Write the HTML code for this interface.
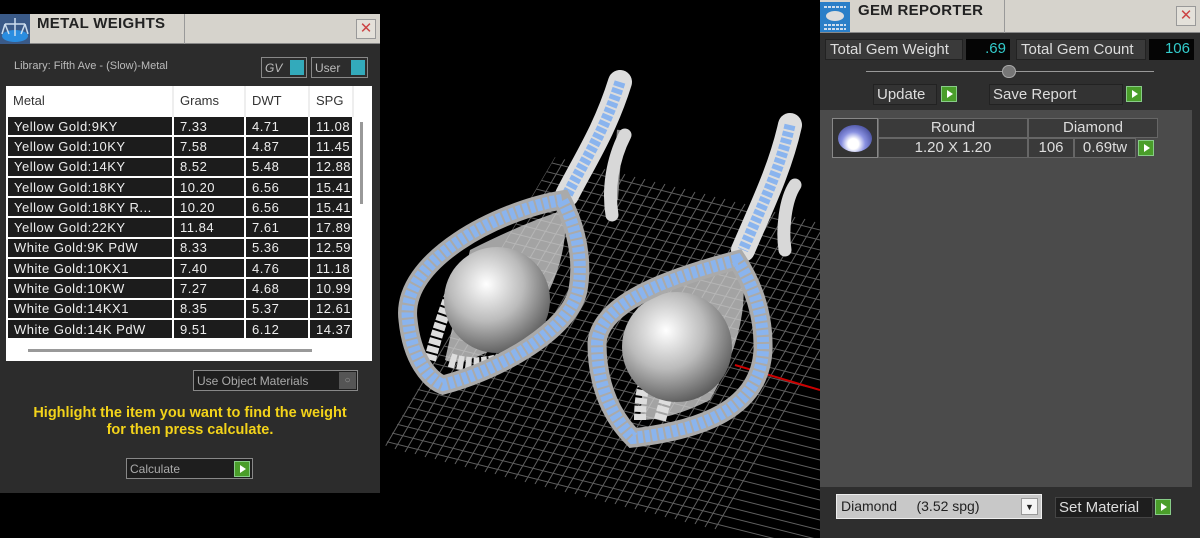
<!DOCTYPE html>
<html><head><meta charset="utf-8"><style>
*{margin:0;padding:0;box-sizing:border-box}
body{width:1200px;height:538px;background:#000;position:relative;overflow:hidden;font-family:"Liberation Sans",sans-serif}
.abs{position:absolute}
.title{background:#d6d3cc;border-bottom:1px solid #888}
.tt{font-weight:bold;font-size:15px;color:#222;letter-spacing:0.3px}
.x{width:20px;height:20px;border:1px solid #999;background:#e4e1da;color:#c44;font-size:15px;text-align:center;line-height:18px}
table{border-collapse:collapse}
td{font-size:13px;color:#eee;background:#1c1c1c;border:2px solid #fff;height:20.3px;padding:0 6px;letter-spacing:0.5px;white-space:nowrap;overflow:hidden}
th{font-size:13px;color:#333;font-weight:normal;text-align:left;padding:0 6px;height:30px;border-right:2px solid #eee}
.gbtn{width:16px;height:16px;background:#4a9e2a;border:1px solid #8c8;position:absolute}
.gbtn:after{content:"";position:absolute;left:5px;top:3px;border-left:6px solid #fff;border-top:4px solid transparent;border-bottom:4px solid transparent}
.rt{color:#ddd;font-size:15px}
</style></head><body>

<svg class="abs" style="left:380px;top:0" width="440" height="538" viewBox="380 0 440 538">
<defs>
<clipPath id="gc"><polygon points="555,157 820,222 820,538 470,538 385,445"/></clipPath>
<radialGradient id="pg" cx="0.4" cy="0.35" r="0.7"><stop offset="0" stop-color="#fff"/><stop offset="0.5" stop-color="#bbb"/><stop offset="1" stop-color="#555"/></radialGradient>
</defs>
<g clip-path="url(#gc)" stroke="#777" stroke-width="1" opacity="0.8">
<path d="M380,120 l460,115 M380,130 l460,115 M380,140 l460,115 M380,150 l460,115 M380,160 l460,115 M380,170 l460,115 M380,180 l460,115 M380,190 l460,115 M380,200 l460,115 M380,210 l460,115 M380,220 l460,115 M380,230 l460,115 M380,240 l460,115 M380,250 l460,115 M380,260 l460,115 M380,270 l460,115 M380,280 l460,115 M380,290 l460,115 M380,300 l460,115 M380,310 l460,115 M380,320 l460,115 M380,330 l460,115 M380,340 l460,115 M380,350 l460,115 M380,360 l460,115 M380,370 l460,115 M380,380 l460,115 M380,390 l460,115 M380,400 l460,115 M380,410 l460,115 M380,420 l460,115 M380,430 l460,115 M380,440 l460,115"/>
<path d="M555,157 l-170,290 M565,159 l-170,290 M575,162 l-170,290 M585,164 l-170,290 M595,167 l-170,290 M605,169 l-170,290 M615,172 l-170,290 M625,174 l-170,290 M635,177 l-170,290 M645,179 l-170,290 M655,182 l-170,290 M665,184 l-170,290 M675,187 l-170,290 M685,189 l-170,290 M695,192 l-170,290 M705,194 l-170,290 M715,197 l-170,290 M725,199 l-170,290 M735,202 l-170,290 M745,204 l-170,290 M755,207 l-170,290 M765,209 l-170,290 M775,212 l-170,290 M785,214 l-170,290 M795,217 l-170,290 M805,219 l-170,290 M815,222 l-170,290 M825,224 l-170,290 M835,227 l-170,290 M845,229 l-170,290 M855,232 l-170,290 M865,234 l-170,290 M875,237 l-170,290 M885,239 l-170,290"/>
</g>
<line x1="735" y1="365" x2="820" y2="390" stroke="#c00" stroke-width="2"/>
<!-- left earring -->
<path d="M620,130 L615,200" stroke="#888" stroke-width="6" fill="none"/>
<path d="M625,135 C612,160 608,190 612,215" stroke="#d8d8d8" stroke-width="13" stroke-linecap="round" fill="none"/>
<path d="M620,82 C605,130 585,160 567,195" stroke="#ddd" stroke-width="24" stroke-linecap="round" fill="none"/>
<path d="M620,82 C605,130 585,160 567,195" stroke="#8ab4ee" stroke-width="11" stroke-dasharray="5 2" fill="none"/>
<path d="M470,250 q60,-30 95,-40 q5,60 -40,120 q-60,40 -80,30 z" fill="#ccc" opacity="0.8"/>
<path d="M450,360 q60,20 125,-55" stroke="#ddd" stroke-width="14" stroke-dasharray="6 2" fill="none"/>
<path d="M430,360 q10,-40 30,-90" stroke="#ddd" stroke-width="12" stroke-dasharray="6 2" fill="none"/>
<circle cx="497" cy="300" r="53" fill="url(#pg)"/>
<path d="M562,200 C500,210 400,260 408,320 C412,360 430,380 443,385 C500,370 570,330 578,290 C585,250 570,215 562,200Z" stroke="#aaa" stroke-width="19" fill="none"/>
<path d="M562,200 C500,210 400,260 408,320 C412,360 430,380 443,385 C500,370 570,330 578,290 C585,250 570,215 562,200Z" stroke="#8ab4ee" stroke-width="12" stroke-dasharray="5 2" fill="none"/>
<!-- right earring -->
<path d="M795,185 C785,200 782,230 785,250" stroke="#d8d8d8" stroke-width="13" stroke-linecap="round" fill="none"/>
<path d="M790,125 C780,170 760,210 743,250" stroke="#ddd" stroke-width="24" stroke-linecap="round" fill="none"/>
<path d="M790,125 C780,170 760,210 743,250" stroke="#8ab4ee" stroke-width="11" stroke-dasharray="5 2" fill="none"/>
<path d="M650,300 q60,-30 90,-40 q15,60 -30,140 q-40,20 -70,20 z" fill="#ccc" opacity="0.8"/>
<path d="M640,420 q0,-40 15,-60 M660,420 q10,-40 20,-50" stroke="#ddd" stroke-width="12" stroke-dasharray="6 2" fill="none"/>
<circle cx="677" cy="347" r="55" fill="url(#pg)"/>
<path d="M737,260 C680,275 600,300 597,343 C597,390 615,420 633,438 C700,430 760,410 763,350 C764,310 750,280 737,260Z" stroke="#aaa" stroke-width="19" fill="none"/>
<path d="M737,260 C680,275 600,300 597,343 C597,390 615,420 633,438 C700,430 760,410 763,350 C764,310 750,280 737,260Z" stroke="#8ab4ee" stroke-width="12" stroke-dasharray="5 2" fill="none"/>
</svg>

<!-- Metal weights panel -->
<div class="abs" style="left:0;top:14px;width:380px;height:479px;background:#2c2c2c">
 <div class="abs title" style="left:0;top:0;width:380px;height:30px"></div>
 <div class="abs" style="left:184px;top:0;width:1px;height:30px;background:#999"></div>
 <svg class="abs" style="left:0;top:0" width="30" height="30"><rect width="30" height="30" fill="#3a5a88"/><ellipse cx="15" cy="22" rx="13" ry="6" fill="#2a8de0"/><path d="M15,4 L15,22 M5,10 L25,10 M5,10 L2,20 M5,10 L9,20 M25,10 L21,20 M25,10 L28,20" stroke="#cde" stroke-width="1.5"/></svg>
 <div class="abs tt" style="left:37px;top:1px">METAL WEIGHTS</div>
 <div class="abs x" style="left:356px;top:5px">✕</div>
 <div class="abs" style="left:14px;top:46px;font-size:11px;color:#bbb">Library: Fifth Ave - (Slow)-Metal</div>
 <div class="abs" style="left:261px;top:43px;width:46px;height:21px;border:1px solid #888;font-size:12px;color:#bbb;padding:3px 0 0 3px;font-style:italic">GV<span class="abs" style="right:2px;top:2px;width:14px;height:15px;background:#3ab"></span></div>
 <div class="abs" style="left:311px;top:43px;width:57px;height:21px;border:1px solid #888;font-size:12px;color:#bbb;padding:3px 0 0 3px">User<span class="abs" style="right:2px;top:2px;width:14px;height:15px;background:#3ab"></span></div>
 <div class="abs" style="left:6px;top:72px;width:366px;height:275px;background:#fff">
  <table class="abs" style="left:0;top:0;width:346px;table-layout:fixed">
   <colgroup><col style="width:166px"><col style="width:72px"><col style="width:64px"><col style="width:44px"></colgroup>
   <tr><th>Metal</th><th>Grams</th><th>DWT</th><th>SPG</th></tr>
   <tr><td>Yellow Gold:9KY</td><td>7.33</td><td>4.71</td><td>11.08</td></tr>
   <tr><td>Yellow Gold:10KY</td><td>7.58</td><td>4.87</td><td>11.45</td></tr>
   <tr><td>Yellow Gold:14KY</td><td>8.52</td><td>5.48</td><td>12.88</td></tr>
   <tr><td>Yellow Gold:18KY</td><td>10.20</td><td>6.56</td><td>15.41</td></tr>
   <tr><td>Yellow Gold:18KY R...</td><td>10.20</td><td>6.56</td><td>15.41</td></tr>
   <tr><td>Yellow Gold:22KY</td><td>11.84</td><td>7.61</td><td>17.89</td></tr>
   <tr><td>White Gold:9K PdW</td><td>8.33</td><td>5.36</td><td>12.59</td></tr>
   <tr><td>White Gold:10KX1</td><td>7.40</td><td>4.76</td><td>11.18</td></tr>
   <tr><td>White Gold:10KW</td><td>7.27</td><td>4.68</td><td>10.99</td></tr>
   <tr><td>White Gold:14KX1</td><td>8.35</td><td>5.37</td><td>12.61</td></tr>
   <tr><td>White Gold:14K PdW</td><td>9.51</td><td>6.12</td><td>14.37</td></tr>
  </table>
  <div class="abs" style="left:354px;top:36px;width:3px;height:82px;background:#999"></div>
  <div class="abs" style="left:22px;top:263px;width:284px;height:3px;background:#999"></div>
 </div>
 <div class="abs" style="left:193px;top:356px;width:165px;height:21px;border:1px solid #888;background:#1e1e1e;font-size:12px;color:#aaa;padding:3px 0 0 3px">Use Object Materials<span class="abs" style="right:1px;top:1px;width:17px;height:17px;background:#555;color:#999;font-size:10px;text-align:center;line-height:17px">○</span></div>
 <div class="abs" style="left:0;top:391px;width:380px;text-align:center;color:#f3d31a;font-weight:bold;font-size:14.5px;line-height:17px">Highlight the item you want to find the weight<br>for then press calculate.</div>
 <div class="abs" style="left:126px;top:444px;width:127px;height:21px;border:1px solid #888;background:#1e1e1e;font-size:12px;color:#aaa;padding:3px 0 0 3px">Calculate<span class="gbtn" style="right:2px;top:2px"></span></div>
</div>

<!-- Gem reporter -->
<div class="abs" style="left:820px;top:0;width:380px;height:538px;background:#2e2e2e">
 <div class="abs title" style="left:0;top:0;width:380px;height:33px"></div>
 <div class="abs" style="left:184px;top:0;width:1px;height:33px;background:#999"></div>
 <svg class="abs" style="left:0;top:2px" width="30" height="30"><rect width="30" height="30" fill="#2a7fc8"/><ellipse cx="15" cy="14" rx="9" ry="5" fill="#ddd"/><path d="M4,5h22M4,23h22M4,27h22" stroke="#cde" stroke-width="2" stroke-dasharray="3 1"/></svg>
 <div class="abs tt" style="left:38px;top:2px">GEM REPORTER</div>
 <div class="abs x" style="left:356px;top:6px">✕</div>
 <div class="abs rt" style="left:5px;top:39px;width:138px;height:21px;background:#3a3a3a;border:1px solid #222;padding:1px 4px">Total Gem Weight</div>
 <div class="abs" style="left:146px;top:39px;width:44px;height:21px;background:#050505;color:#3cc;font-size:15px;text-align:right;padding:1px 4px">.69</div>
 <div class="abs rt" style="left:196px;top:39px;width:130px;height:21px;background:#3a3a3a;border:1px solid #222;padding:1px 4px">Total Gem Count</div>
 <div class="abs" style="left:329px;top:39px;width:45px;height:21px;background:#050505;color:#3cc;font-size:15px;text-align:right;padding:1px 4px">106</div>
 <div class="abs" style="left:46px;top:71px;width:288px;height:1px;background:#999"></div>
 <div class="abs" style="left:182px;top:65px;width:14px;height:13px;border-radius:7px;background:#777;border:1px solid #aaa"></div>
 <div class="abs rt" style="left:53px;top:84px;width:64px;height:21px;background:#333;border:1px solid #222;padding:1px 3px">Update</div>
 <span class="gbtn" style="left:121px;top:86px"></span>
 <div class="abs rt" style="left:169px;top:84px;width:134px;height:21px;background:#333;border:1px solid #222;padding:1px 3px">Save Report</div>
 <span class="gbtn" style="left:306px;top:86px"></span>
 <div class="abs" style="left:0;top:110px;width:372px;height:377px;background:#4b4b4b"></div>
 <div class="abs" style="left:12px;top:118px;width:46px;height:40px;border:1px solid #888;background:#333"><div class="abs" style="left:5px;top:6px;width:34px;height:27px;border-radius:50%;background:radial-gradient(circle at 45% 70%,#fff 20%,#8890e0 45%,#333a88 90%)"></div></div>
 <div class="abs rt" style="left:58px;top:118px;width:150px;height:20px;border:1px solid #666;background:#3a3a3a;text-align:center">Round</div>
 <div class="abs rt" style="left:208px;top:118px;width:130px;height:20px;border:1px solid #666;background:#3a3a3a;text-align:center">Diamond</div>
 <div class="abs rt" style="left:58px;top:138px;width:150px;height:20px;border:1px solid #666;background:#3a3a3a;text-align:center">1.20 X 1.20</div>
 <div class="abs rt" style="left:208px;top:138px;width:46px;height:20px;border:1px solid #666;background:#3a3a3a;text-align:center">106</div>
 <div class="abs rt" style="left:254px;top:138px;width:62px;height:20px;border:1px solid #666;background:#3a3a3a;text-align:center">0.69tw</div>
 <span class="gbtn" style="left:318px;top:140px"></span>
 <div class="abs" style="left:16px;top:494px;width:206px;height:25px;background:#c8c8c8;border:1px solid #eee;font-size:14px;color:#222;padding:3px 4px">Diamond&nbsp;&nbsp;&nbsp;&nbsp;&nbsp;(3.52 spg)<span class="abs" style="right:3px;top:3px;width:17px;height:17px;background:#f4f4f4;border:1px solid #999;font-size:9px;text-align:center;line-height:17px">▼</span></div>
 <div class="abs rt" style="left:235px;top:497px;width:98px;height:21px;background:#1e1e1e;border:1px solid #444;padding:1px 3px">Set Material</div>
 <span class="gbtn" style="left:335px;top:499px"></span>
</div>
</body></html>
